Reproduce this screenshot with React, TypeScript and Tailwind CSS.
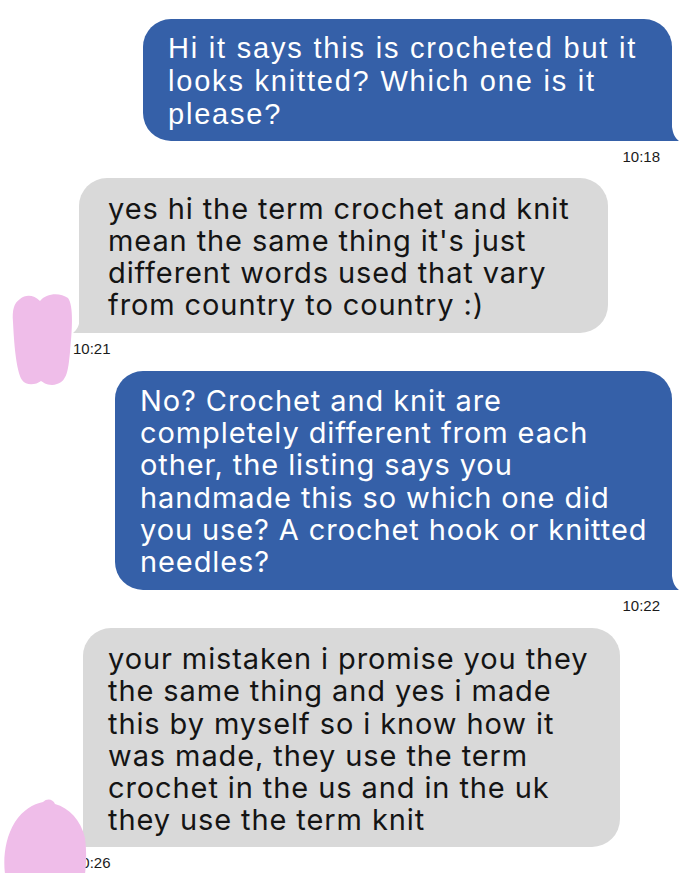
import React from 'react';

const sans = "font-['Inter','Noto_Sans',sans-serif]";
const helv = "font-['Liberation_Sans',Arial,sans-serif]";

const Lines: React.FC<{ lines: string[]; className: string }> = ({ lines, className }) => (
  <p className={`whitespace-nowrap ${className}`}>
    {lines.map((l, i) => (
      <span key={i} className="block">{l}</span>
    ))}
  </p>
);

const SentBubble: React.FC<{ lines: string[]; className: string; text: string }> = ({ lines, className, text }) => (
  <div className={`relative self-end rounded-[28px] rounded-br-none bg-[#3560a8] text-white ${className}`}>
    <Lines lines={lines} className={text} />
    <svg className="absolute -right-[7px] bottom-0" width="12" height="14" viewBox="0 0 12 14">
      <path d="M0 0 L0 14 L12 14 C8 11 6 7 5 0 Z" fill="#3560a8" />
    </svg>
  </div>
);

const ReceivedBubble: React.FC<{ lines: string[]; className: string }> = ({ lines, className }) => (
  <div className={`relative self-start rounded-[28px] rounded-bl-none bg-[#d9d9d9] text-[#141414] ${className}`}>
    <Lines lines={lines} className={`${sans} text-[29px] tracking-[0.9px]`} />
    <svg className="absolute -left-[6px] bottom-0" width="12" height="14" viewBox="0 0 12 14">
      <path d="M12 0 L12 14 L0 14 C4 11 6 7 7 0 Z" fill="#d9d9d9" />
    </svg>
  </div>
);

const Time: React.FC<{ children: React.ReactNode; className: string }> = ({ children, className }) => (
  <span className={`${helv} text-[15px] leading-[15px] text-[#1b1b1b] ${className}`}>{children}</span>
);

const Blob: React.FC<{ className: string; d: string; w: number; h: number }> = ({ className, d, w, h }) => (
  <svg className={`absolute ${className}`} width={w} height={h} viewBox={`0 0 ${w} ${h}`}>
    <path d={d} fill="#efbde9" />
  </svg>
);

export default function App() {
  return (
    <div className="relative h-[873px] w-[700px] overflow-hidden bg-white">
      <div className="flex flex-col">
        <SentBubble
          className="mt-[19px] mr-[28px] w-[529px] pl-[25px] pt-[13px] pb-[10px]"
          text={`${helv} text-[29px] leading-[33px] tracking-[1.8px]`}
          lines={['Hi it says this is crocheted but it', 'looks knitted? Which one is it', 'please?']}
        />
        <Time className="mt-[8px] mr-[40px] self-end">10:18</Time>

        <ReceivedBubble
          className="mt-[14px] ml-[79px] w-[529px] pl-[29px] pt-[15px] pb-[12px] leading-[32px]"
          lines={[
            'yes hi the term crochet and knit',
            "mean the same thing it's just",
            'different words used that vary',
            'from country to country :)',
          ]}
        />
        <Time className="mt-[8px] ml-[73px] self-start">10:21</Time>

        <SentBubble
          className="mt-[15px] mr-[28px] w-[557px] pl-[25px] pt-[14px] pb-[12px] leading-[32.2px]"
          text={`${sans} text-[29px] tracking-[0.9px]`}
          lines={[
            'No? Crochet and knit are',
            'completely different from each',
            'other, the listing says you',
            'handmade this so which one did',
            'you use? A crochet hook or knitted',
            'needles?',
          ]}
        />
        <Time className="mt-[8px] mr-[40px] self-end">10:22</Time>

        <ReceivedBubble
          className="mt-[15px] ml-[83px] w-[537px] pl-[25px] pt-[15px] pb-[11px] leading-[32.2px]"
          lines={[
            'your mistaken i promise you they',
            'the same thing and yes i made',
            'this by myself so i know how it',
            'was made, they use the term',
            'crochet in the us and in the uk',
            'they use the term knit',
          ]}
        />
        <Time className="mt-[8px] ml-[73px] self-start">10:26</Time>
      </div>

      <Blob
        className="left-[10px] top-[292px]"
        w={64}
        h={95}
        d="M10 7 C16 2 24 3 30 9 C36 1 50 0 58 6 C64 14 62 40 60 60 C58 80 57 92 42 93 C36 93 33 90 31 89 C26 93 16 94 12 88 C6 78 4 50 3 30 C2 18 4 11 10 7 Z"
      />
      <Blob
        className="left-[3px] top-[798px]"
        w={84}
        h={76}
        d="M40 4 C44 0 50 1 52 6 C66 10 78 22 82 40 C84 56 83 68 82 76 L2 76 C0 60 2 40 12 24 C20 12 30 6 40 4 Z"
      />
    </div>
  );
}
